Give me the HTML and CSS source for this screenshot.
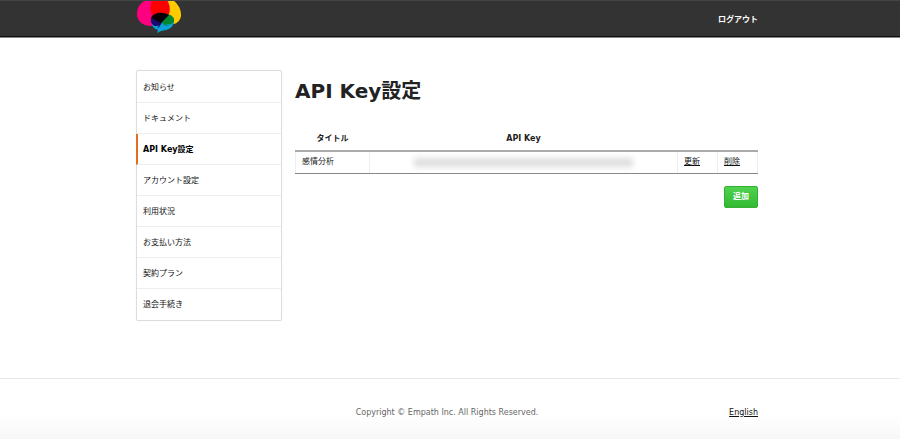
FILE: index.html
```
<!DOCTYPE html>
<html lang="ja">
<head>
  <meta charset="UTF-8" />
  <meta name="viewport" content="width=device-width, initial-scale=1" />
  <title>API Key設定</title>
  <link rel="stylesheet" href="styles.css">
</head>
<body>

  <header class="header">
    <div class="container header-inner">
      <a href="#" class="logo" aria-label="Empath">
        <svg width="46" height="33" viewBox="0 0 46 33">
          <path d="M11-1C4 1 1 7 1 13c0 7 6 12 13 12 3 0 6-1 9-3L30-1z" fill="#ff0080" />
          <path d="M28-1h9c5 4 8 9 8 15 0 4-3 8-7 9L28 16z" fill="#ffcb00" />
          <path d="M17-1c-3 4-4 10 0 16h15c3-5 2-11-1-16z" fill="#ff0000" />
          <path d="M15 17l11 4 12-1c0 4-3 8-8 9l-5 1-4 2 1-3c-4-1-7-5-7-9z" fill="#0ba2d8" />
          <path d="M15 17c-1 4 1 7 4 8 2 0 3 0 4-1l-2 4c2-2 4-4 5-7z" fill="#1a0a70" />
          <path d="M31 13c5 1 8 4 7 7s-4 4-8 3l2 2c-3 0-5-2-7-4z" fill="#008833" />
          <path d="M15 17c2-5 11-7 18-3l-8 8z" fill="#090006" />
        </svg>
      </a>
      <a href="#" class="logout">ログアウト</a>
    </div>
  </header>

  <div class="container content">
    <nav class="menu">
      <a href="#">お知らせ</a>
      <a href="#">ドキュメント</a>
      <a href="#" class="active">API Key設定</a>
      <a href="#">アカウント設定</a>
      <a href="#">利用状況</a>
      <a href="#">お支払い方法</a>
      <a href="#">契約プラン</a>
      <a href="#">退会手続き</a>
    </nav>

    <main class="main">
      <h1>API Key設定</h1>
      <table class="keys">
        <thead>
          <tr>
            <th class="col-title">タイトル</th>
            <th>API Key</th>
            <th class="col-action"></th>
            <th class="col-action"></th>
          </tr>
        </thead>
        <tbody>
          <tr>
            <td>感情分析</td>
            <td><div class="masked"></div></td>
            <td><a href="#">更新</a></td>
            <td><a href="#">削除</a></td>
          </tr>
        </tbody>
      </table>
      <div class="acciones">
        <button type="button" class="add">追加</button>
      </div>
    </main>
  </div>

  <footer class="footer">
    <div class="container footer-inner">
      <span class="copyright">Copyright © Empath Inc. All Rights Reserved.</span>
      <a href="#" class="lang">English</a>
    </div>
  </footer>

</body>
</html>
```
FILE: styles.css
```
/* Reset */
* {
  box-sizing: border-box;
}
body {
  margin: 0;
  font-family: Verdana, "DejaVu Sans", "Noto Sans CJK JP", sans-serif;
  font-size: 8px;
  line-height: 12px;
  background: #fff;
  color: #222;
}
a {
  color: #111;
}

.container {
  width: 100%;
  max-width: 628px;
  margin: 0 auto;
  padding-right: 6px;
}

/* Header */
.header {
  height: 38px;
  background: #333;
  border-top: 1px solid #444;
  border-bottom: 1px solid #888;
  box-shadow: inset 0 -1px 0 #111;
}
.header-inner {
  display: flex;
  justify-content: space-between;
  align-items: flex-start;
}
.logo svg {
  display: block;
}
.logout {
  margin-top: 13px;
  color: #fff;
  font-weight: bold;
  text-decoration: none;
}

.content {
  display: flex;
  align-items: flex-start;
  gap: 13px;
  padding-top: 32px;
  padding-bottom: 57px;
}

/* Menu */
.menu {
  flex: 0 0 146px;
  padding-top: 1px;
  border: 1px solid #ddd;
  border-radius: 2px;
  box-shadow: 0 0 1px #ddd;
}
.menu a {
  display: block;
  height: 31px;
  padding: 0 6px;
  line-height: 31px;
  border-bottom: 1px solid #eee;
  text-decoration: none;
}
.menu a:last-child {
  border-bottom: none;
}
.menu a.active {
  margin-left: -1px;
  padding-left: 5px;
  border-left: 2px solid #e07020;
  color: #000;
  font-weight: bold;
}

/* Main */
.main {
  flex: 1;
  min-width: 0;
}
h1 {
  margin: 9px 0 24px;
  font-size: 20px;
  line-height: 24px;
}
.keys {
  width: 100%;
  table-layout: fixed;
  border-collapse: collapse;
}
.keys th {
  height: 24px;
  padding: 0;
}
.keys td {
  height: 22px;
  padding: 0 6px;
  border: 1px solid #eee;
  border-top: 2px solid #aaa;
  border-bottom: 1px solid #888;
}
.col-title {
  width: 74px;
}
.col-action {
  width: 40px;
}
.masked {
  height: 9px;
  margin: 0 38px;
  background: #ddd;
  filter: blur(3px);
}
.acciones {
  display: flex;
  justify-content: flex-end;
  margin-top: 12px;
}
.add {
  height: 22px;
  padding: 0 8px;
  font: inherit;
  font-weight: bold;
  color: #fff;
  background: linear-gradient(#50d250, #32b932);
  border: 1px solid #35b035;
  border-radius: 2px;
  cursor: pointer;
}

/* Footer */
.footer {
  border-top: 1px solid #e8e8e8;
  height: 61px;
  background: linear-gradient(#fff 60%, #f7f7f7);
}
.footer-inner {
  display: grid;
  grid-template-columns: 1fr auto 1fr;
  padding-top: 28px;
}
.copyright {
  grid-column: 2;
  color: #666;
}
.lang {
  justify-self: end;
}
```
